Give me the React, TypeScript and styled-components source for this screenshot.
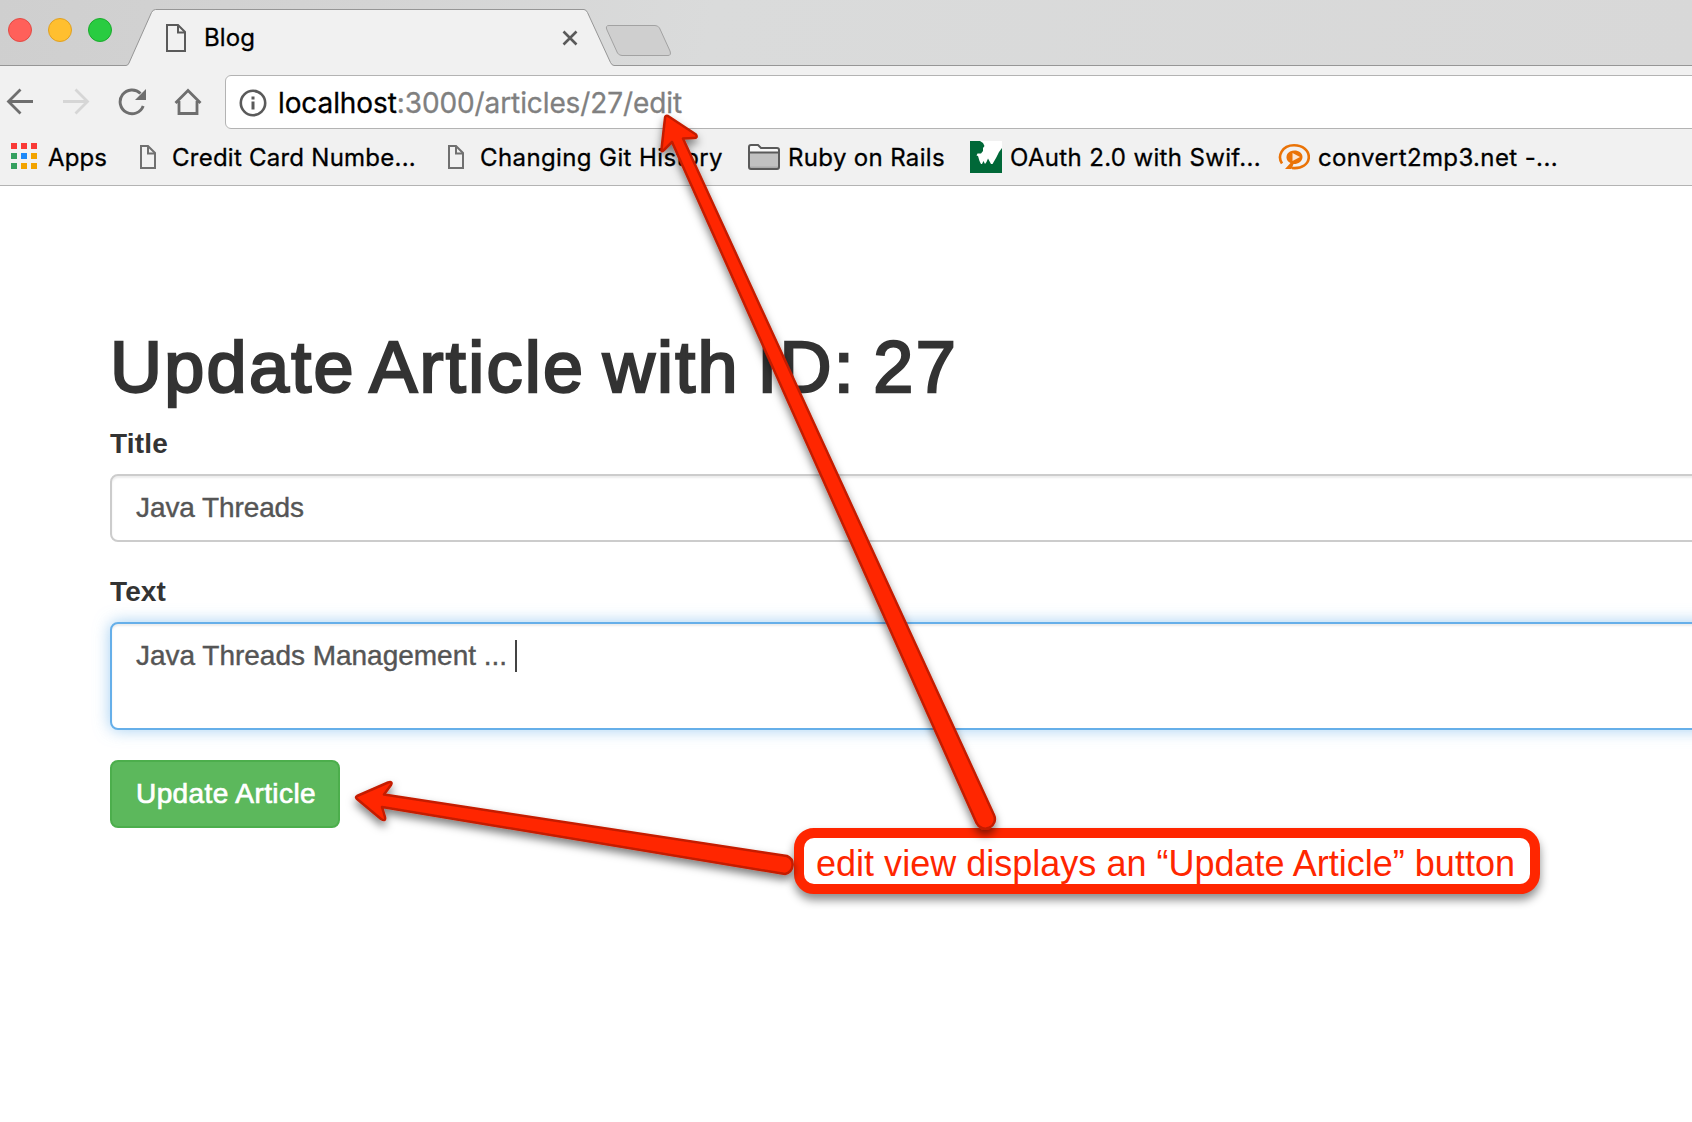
import React, { useLayoutEffect, useRef, useState } from 'react';
import styled, { createGlobalStyle } from 'styled-components';

const Global = createGlobalStyle`
  html, body { margin: 0; padding: 0; background: #fff; overflow: hidden; }
  * { box-sizing: border-box; }
`;

const ui = `'Inter', 'Noto Sans', sans-serif`;
const helvetica = `'Liberation Sans', Arial, sans-serif`;

const Page = styled.div`
  position: relative;
  width: 1692px;
  height: 1122px;
  overflow: hidden;
  background: #fff;
  display: flex;
  flex-direction: column;
`;

const TabStrip = styled.header`
  height: 66px;
  display: flex;
  align-items: flex-start;
  background: linear-gradient(100deg, #cfcfcf 0%, #d4d4d4 22%, #dadbdb 42%, #d8d8d8 100%);
  position: relative;
`;

const TabShape = styled.svg`
  position: absolute;
  left: 0;
  top: 0;
`;

const TrafficLights = styled.div`
  display: flex;
  gap: 16px;
  padding: 18px 0 0 8px;
  width: 166px;
  position: relative;
`;

const Light = styled.span<{ $fill: string; $edge: string }>`
  width: 24px;
  height: 24px;
  border-radius: 50%;
  background: ${(p) => p.$fill};
  border: 1px solid ${(p) => p.$edge};
`;

const TabContent = styled.div`
  position: relative;
  display: flex;
  align-items: center;
  width: 412px;
  height: 56px;
  margin-top: 10px;
`;

const TabTitle = styled.span`
  margin-left: 18px;
  flex: 1;
  font: 400 24px/30px ${ui};
  color: #000;
  -webkit-text-stroke: 0.3px #000;
`;

const Toolbar = styled.nav`
  height: 63px;
  display: flex;
  align-items: center;
  background: #f1f1f1;
  padding: 9px 0 0 6px;
`;

const NavIcons = styled.div`
  display: flex;
  align-items: center;
  gap: 28px;
  width: 219px;
`;

const AddressBar = styled.div`
  flex: 1;
  height: 54px;
  display: flex;
  align-items: center;
  gap: 12px;
  padding: 1px 0 0 13px;
  margin-right: -10px;
  background: #fff;
  border: 1px solid #b3b3b3;
  border-radius: 6px;
`;

const Url = styled.span`
  font: 400 28px/36px ${ui};
  color: #808080;
  white-space: pre;
  margin: 1px 0 0 -1px;
  -webkit-text-stroke: 0.3px currentColor;
`;

const Host = styled.span`
  color: #000;
`;

const Bookmarks = styled.div`
  height: 57px;
  display: flex;
  background: #f1f1f1;
  border-bottom: 1px solid #b3b3b3;
  padding-left: 10px;
`;

const Bookmark = styled.div<{ $width: number }>`
  width: ${(p) => p.$width}px;
  flex: none;
  display: flex;
  align-items: center;
  height: 56px;
`;

const BookmarkLabel = styled.span<{ $gap: number }>`
  margin: 2px 0 0 ${(p) => p.$gap}px;
  font: 400 24px/30px ${ui};
  color: #000;
  -webkit-text-stroke: 0.3px #000;
`;

const Main = styled.main`
  padding: 141px 0 0 110px;
  display: flex;
  flex-direction: column;
  align-items: flex-start;
  font-family: ${helvetica};
`;

const Heading = styled.h1`
  margin: 0 0 17px;
  font: 400 72px/80px ${helvetica};
  word-spacing: -5px;
  color: #333;
  -webkit-text-stroke: 2.4px #333;
`;

const Label = styled.label`
  font: 700 28px/40px ${helvetica};
  color: #333;
  margin-bottom: 10px;
`;

const Field = styled.div<{ $focused?: boolean; $height: number }>`
  width: 1700px;
  height: ${(p) => p.$height}px;
  padding: 12px 24px;
  margin-bottom: 30px;
  display: flex;
  align-items: flex-start;
  font: 400 28px/40px ${helvetica};
  color: #555;
  -webkit-text-stroke: 0.4px #555;
  background: #fff;
  border: 2px solid ${(p) => (p.$focused ? '#66afe9' : '#ccc')};
  border-radius: 8px;
  box-shadow: inset 0 2px 2px rgba(0, 0, 0, 0.075)
    ${(p) => (p.$focused ? ', 0 0 16px rgba(102, 175, 233, 0.6)' : '')};
`;

const Caret = styled.i`
  width: 2px;
  height: 32px;
  margin: 4px 0 0 8px;
  background: #444;
`;

const Submit = styled.button`
  width: 230px;
  height: 68px;
  padding: 0 0 0 2px;
  font: 400 28px/40px ${helvetica};
  color: #fff;
  background: #5cb85c;
  border: 2px solid #4cae4c;
  border-radius: 8px;
  -webkit-text-stroke: 0.7px #fff;
`;

const Arrows = styled.svg`
  position: absolute;
  left: 0;
  top: 0;
  pointer-events: none;
`;

const Callout = styled.aside`
  position: absolute;
  left: 794px;
  top: 828px;
  width: 746px;
  height: 66px;
  display: flex;
  align-items: center;
  padding: 5px 0 0 12px;
  background: #fff;
  border: 10px solid #ff2600;
  border-radius: 20px;
  box-shadow: 0 6px 10px rgba(0, 0, 0, 0.45);
  font: 400 36px/44px ${helvetica};
  color: #ff2600;
`;

const Fitted = styled.span`
  display: inline-block;
  white-space: pre;
`;

/* Spreads the tracking so that a run of text fills the given width. */
function Fit({ width, children }: { width: number; children: React.ReactNode }) {
  const ref = useRef<HTMLSpanElement>(null);
  const [tracking, setTracking] = useState(0);
  useLayoutEffect(() => {
    const el = ref.current;
    if (!el) return;
    const natural = el.getBoundingClientRect().width;
    setTracking((width - natural) / (el.textContent || ' ').length);
  }, [width]);
  return (
    <Fitted ref={ref} style={{ letterSpacing: tracking }}>
      {children}
    </Fitted>
  );
}

const PageIcon = ({ w, h, stroke }: { w: number; h: number; stroke: string }) => (
  <svg width={w} height={h} viewBox={`0 0 ${w} ${h}`} fill="none" stroke={stroke} strokeWidth="2">
    <path d={`M1 1H${w - 8}L${w - 1} 8V${h - 1}H1Z`} />
    <path d={`M${w - 8} 1V8.500H${w - 1}`} />
  </svg>
);

const appColors = ['#f93a37', '#f93a37', '#f93a37', '#34a05f', '#1e88f7', '#f2a300', '#34a05f', '#f2a300', '#f2a300'];

const AppsIcon = () => (
  <svg width="28" height="28" viewBox="0 0 28 28">
    {appColors.map((c, i) => (
      <rect key={i} x={1 + (i % 3) * 10} y={Math.floor(i / 3) * 10} width="6" height="6" fill={c} />
    ))}
  </svg>
);

const FolderIcon = () => (
  <svg width="32" height="26" viewBox="0 0 32 26">
    <path d="M1 3Q1 1 3 1H10L14 4H29Q31 4 31 6V23Q31 25 29 25H3Q1 25 1 23Z" fill="#f8f8f8" />
    <path d="M1 8.500H31V25H1Z" fill="#c1c1c1" />
    <path d="M2 22.500H30V24H2Z" fill="#aaa" />
    <path d="M1 3Q1 1 3 1H10L13 4H29Q31 4 31 6V23Q31 25 29 25H3Q1 25 1 23ZM1 8.500H31" fill="none" stroke="#5a5a5a" strokeWidth="2" />
  </svg>
);

const OAuthIcon = () => (
  <svg width="32" height="32" viewBox="0 0 32 32">
    <rect width="32" height="32" fill="#006838" />
    <path d="M10 0H32V7L29 11L26 17L22.500 23H21L18 17.500L16.500 21L15 23L13.500 20L12 23H11L9.500 20L8 15L6.500 14.500L7.500 12.500H11L13 10V7L14.500 5L13 2Z" fill="#fff" />
  </svg>
);

const ConvertIcon = () => (
  <svg width="32" height="26" viewBox="0 0 32 26" fill="none">
    <path d="M4 19.500C-1 12 4 1.300 16 1.300C25 1.300 30.800 6.500 30.800 13C30.800 20 24 25 14 24" stroke="#ea7307" strokeWidth="2.600" />
    <path d="M7 25L12.500 19C7.500 17 7 10 12 7.500C18 5 24.500 8 24.500 13C24.500 18 19 20.500 15.500 20L13.500 25Z" fill="#ea7307" />
    <path d="M14.500 9L22 13L14.500 17Z" fill="#fbe6d4" />
  </svg>
);

export default function App() {
  return (
    <Page>
      <Global />
      <TabStrip>
        <TabShape width="1692" height="66" viewBox="0 0 1692 66">
          <path d="M0 65.500H126Q128 65.500 129 63L151.500 12.500Q153 9.500 155.500 9.500H584Q586 9.500 587.500 12.500L610.500 62.500Q612 65.500 614 65.500H1692V66H0Z" fill="#f1f1f1" />
          <path d="M0 65.500H126Q128 65.500 129 63L151.500 12.500Q153 9.500 155.500 9.500H584Q586 9.500 587.500 12.500L610.500 62.500Q612 65.500 614 65.500H1692" fill="none" stroke="#969696" />
          <path d="M609 25.500H655Q658 25.500 659.500 28L670 51Q671.500 55.500 668 55.500H622Q619 55.500 617.500 53L607 30Q605 25.500 609 25.500Z" fill="#cfcfcf" stroke="#a2a2a2" />
        </TabShape>
        <TrafficLights>
          <Light $fill="#ff605a" $edge="#e24b45" />
          <Light $fill="#ffbf2f" $edge="#dfa023" />
          <Light $fill="#29cc41" $edge="#1aab2c" />
        </TrafficLights>
        <TabContent>
          <PageIcon w={20} h={28} stroke="#5a5a5a" />
          <TabTitle><Fit width={51}>Blog</Fit></TabTitle>
          <svg width="16" height="16" viewBox="0 0 16 16" stroke="#5a5a5a" strokeWidth="2.600">
            <path d="M1.500 1.500L14.500 14.500M14.500 1.500L1.500 14.500" />
          </svg>
        </TabContent>
      </TabStrip>
      <Toolbar>
        <NavIcons>
          <svg width="28" height="28" viewBox="0 0 28 28" fill="none" stroke="#6e6e6e" strokeWidth="2.800">
            <path d="M27 13.500H3M14.500 1.500L2.500 13.500L14.500 25.500" />
          </svg>
          <svg width="28" height="28" viewBox="0 0 28 28" fill="none" stroke="#d6d6d6" strokeWidth="2.800">
            <path d="M1 13.500H25M13.500 1.500L25.500 13.500L13.500 25.500" />
          </svg>
          <svg width="28" height="28" viewBox="0 0 28 28" fill="none">
            <path d="M25.200 18A11.900 11.900 0 1 1 22.500 5.500" stroke="#6e6e6e" strokeWidth="2.900" />
            <path d="M28 1V12H17Z" fill="#6e6e6e" />
          </svg>
          <svg width="28" height="28" viewBox="0 0 28 28" fill="none" stroke="#6e6e6e" strokeWidth="2.800">
            <path d="M1.500 15L14 2.500L26.500 15M5 13V25.500H23V13" />
          </svg>
        </NavIcons>
        <AddressBar>
          <svg width="28" height="28" viewBox="0 0 28 28" fill="none">
            <circle cx="14" cy="14" r="12.200" stroke="#5a5a5a" strokeWidth="2.600" />
            <path d="M14 7.500V10.500M14 12.500V20.500" stroke="#5a5a5a" strokeWidth="3" />
          </svg>
          <Url><Fit width={404}><Host>localhost</Host>:3000/articles/27/edit</Fit></Url>
        </AddressBar>
      </Toolbar>
      <Bookmarks>
        <Bookmark $width={130}><AppsIcon /><BookmarkLabel $gap={10}><Fit width={59}>Apps</Fit></BookmarkLabel></Bookmark>
        <Bookmark $width={308}><PageIcon w={16} h={24} stroke="#707070" /><BookmarkLabel $gap={16}><Fit width={244}>Credit Card Numbe...</Fit></BookmarkLabel></Bookmark>
        <Bookmark $width={300}><PageIcon w={16} h={24} stroke="#707070" /><BookmarkLabel $gap={16}><Fit width={243}>Changing Git History</Fit></BookmarkLabel></Bookmark>
        <Bookmark $width={222}><FolderIcon /><BookmarkLabel $gap={8}><Fit width={157}>Ruby on Rails</Fit></BookmarkLabel></Bookmark>
        <Bookmark $width={308}><OAuthIcon /><BookmarkLabel $gap={8}><Fit width={251}>OAuth 2.0 with Swif...</Fit></BookmarkLabel></Bookmark>
        <Bookmark $width={300}><ConvertIcon /><BookmarkLabel $gap={8}><Fit width={240}>convert2mp3.net -...</Fit></BookmarkLabel></Bookmark>
      </Bookmarks>
      <Main>
        <Heading><Fit width={848}>Update Article with ID: 27</Fit></Heading>
        <Label><Fit width={58}>Title</Fit></Label>
        <Field $height={68}><Fit width={168}>Java Threads</Fit></Field>
        <Label><Fit width={56}>Text</Fit></Label>
        <Field $height={108} $focused><Fit width={371}>Java Threads Management ...</Fit><Caret /></Field>
        <Submit><Fit width={180}>Update Article</Fit></Submit>
      </Main>
      <Callout><Fit width={699}>edit view displays an “Update Article” button</Fit></Callout>
      <Arrows width="1692" height="1122" viewBox="0 0 1692 1122">
        <defs>
          <filter id="shade" x="-10%" y="-10%" width="120%" height="130%">
            <feDropShadow dx="0" dy="5" stdDeviation="4" floodColor="#000" floodOpacity="0.5" />
          </filter>
        </defs>
        <g fill="#ff2600" stroke="#c41d00" strokeWidth="2.500" strokeLinejoin="round" filter="url(#shade)">
          <path d="M668 116L696 134.500Q698 138 694 138L683 138.500L994 815A9.500 9.500 0 0 1 976.500 823L672 142L664 150Q661 153 661.500 149L665 118Q665 115 668 116Z" />
          <path d="M357 796L388 782.500Q393 781 391 785L384 794.500L787 856A9.500 9.500 0 0 1 785 874L382 807L385 817Q386 822 381 819L357 799Q355 797 357 796Z" />
        </g>
      </Arrows>
    </Page>
  );
}
